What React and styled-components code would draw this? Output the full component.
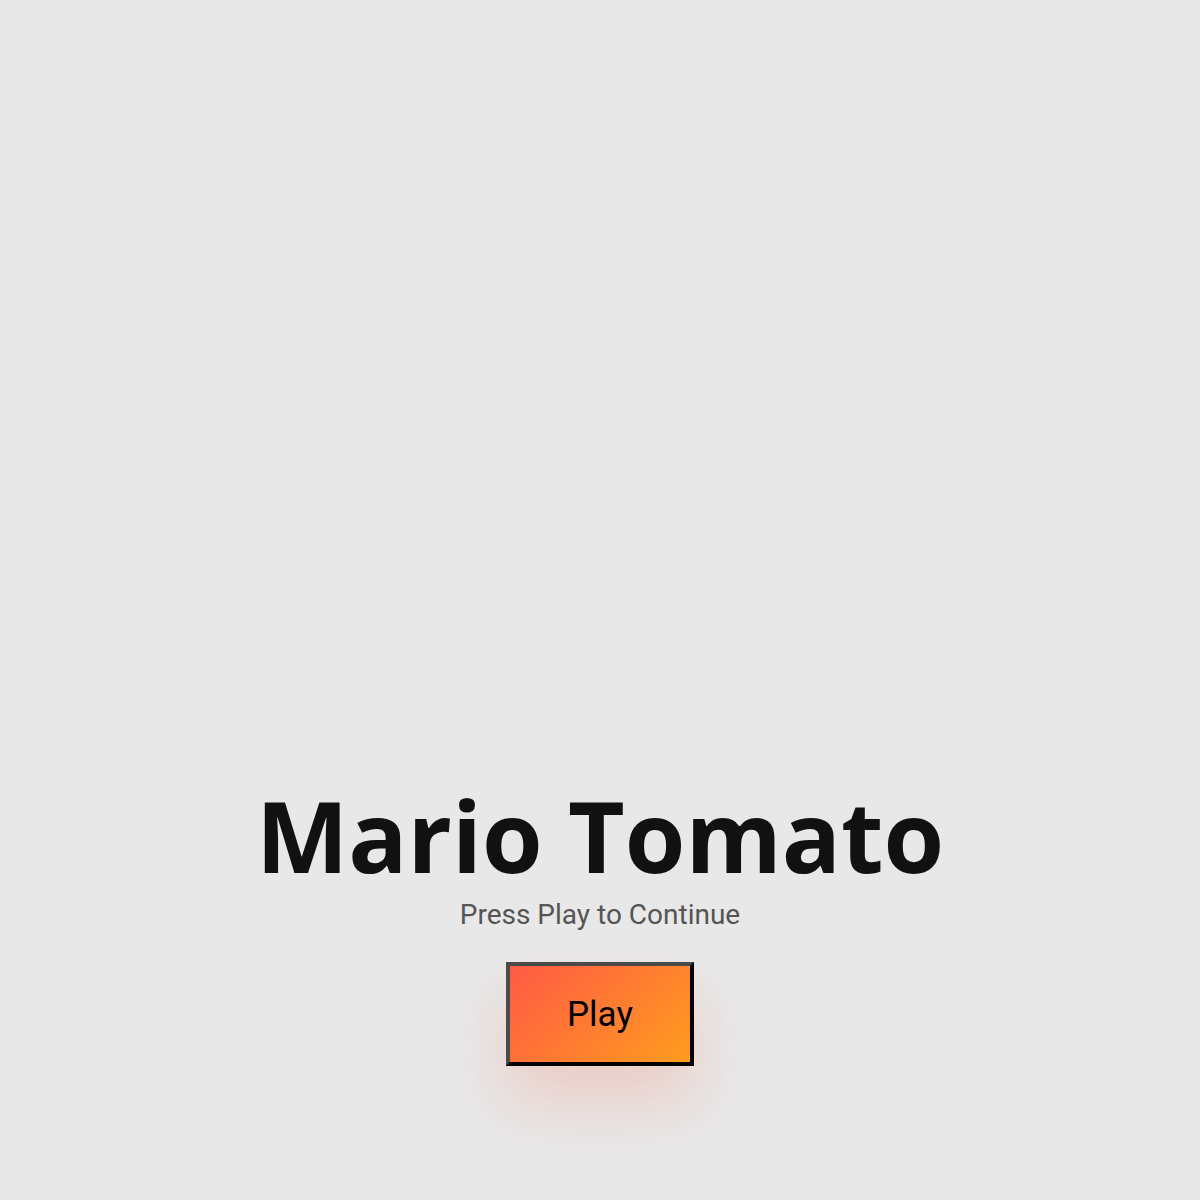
import React from "react";
import styled, { createGlobalStyle } from "styled-components";

const Global = createGlobalStyle`
  html, body { margin: 0; padding: 0; }
  body { background: #e8e8e8; font-family: "Roboto", "Liberation Sans", sans-serif; }
`;

const Screen = styled.main`
  min-height: 100vh;
  box-sizing: border-box;
  display: flex;
  flex-direction: column;
  align-items: center;
  justify-content: flex-end;
  padding-bottom: 134px;
`;

const Title = styled.h1`
  margin: 0 0 7px;
  font-family: "Open Sans", "DejaVu Sans", sans-serif;
  font-weight: 700;
  font-size: 98px;
  line-height: 1.1;
  color: #111;
`;

const Subtitle = styled.p`
  margin: 0 0 29px;
  font-family: "Roboto", "Liberation Sans", sans-serif;
  font-size: 28px;
  line-height: 1.3;
  color: #555;
`;

const PlayButton = styled.button`
  width: 188px;
  height: 104px;
  box-sizing: border-box;
  border: 4px solid;
  border-color: #4a4a4a #000 #000 #4a4a4a;
  background: linear-gradient(135deg, #ff5a45 0%, #ff9c1e 100%);
  font-family: "Roboto", "Liberation Sans", sans-serif;
  font-size: 35px;
  color: #000;
  cursor: pointer;
  box-shadow: 0 36px 60px rgba(255, 99, 71, 0.2);
`;

export default function App() {
  return (
    <>
      <Global />
      <Screen>
        <Title>Mario Tomato</Title>
        <Subtitle>Press Play to Continue</Subtitle>
        <PlayButton>Play</PlayButton>
      </Screen>
    </>
  );
}
